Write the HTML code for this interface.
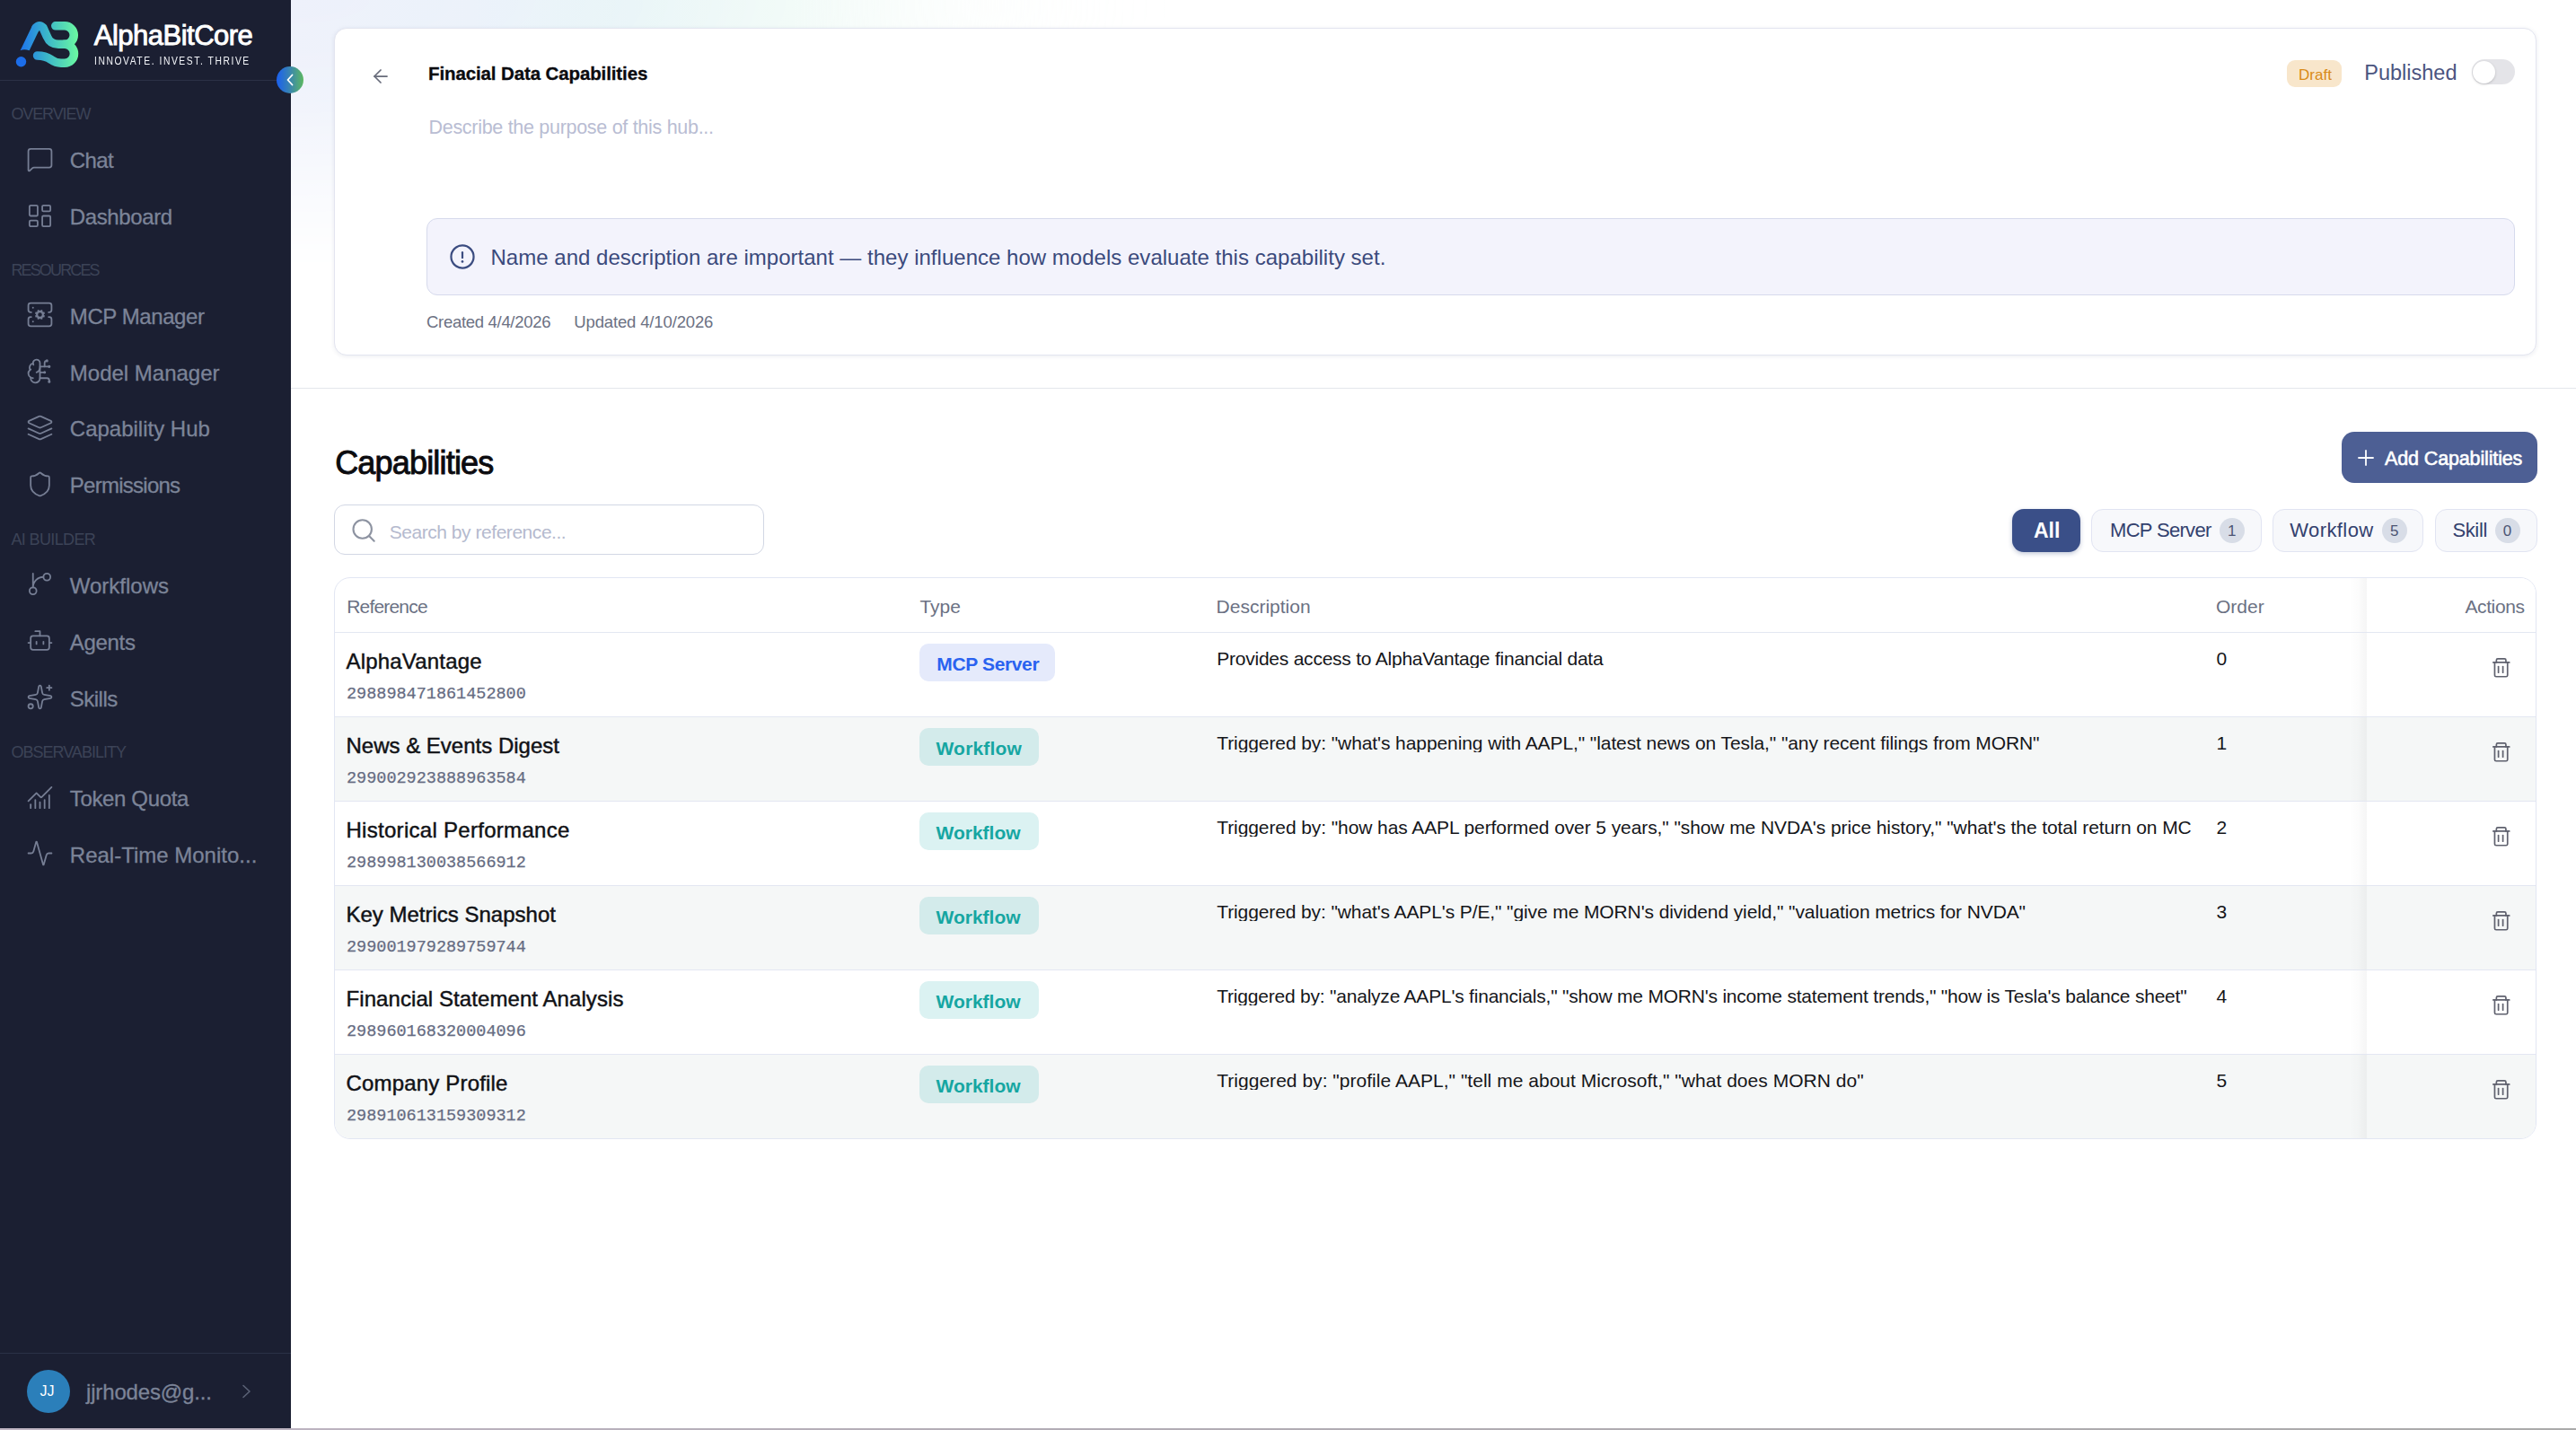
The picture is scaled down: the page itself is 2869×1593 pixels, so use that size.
<!DOCTYPE html>
<html><head><meta charset="utf-8"><title>Capability Hub</title>
<style>
*{box-sizing:border-box;margin:0;padding:0}
html,body{width:2869px;height:1593px;overflow:hidden;background:#fff;font-family:"Liberation Sans",sans-serif}
.abs{position:absolute}
.t{position:absolute;white-space:nowrap;line-height:1}
.ico{fill:none;stroke:#767e94;stroke-width:1.4;stroke-linecap:round;stroke-linejoin:round}
</style></head><body>
<div class="abs" style="left:0;top:0;width:324px;height:1593px;background:#1b1f32"></div>
<svg class="abs" style="left:0;top:0" width="100" height="90" viewBox="0 0 100 90">
<defs><linearGradient id="lg" x1="20" y1="0" x2="88" y2="0" gradientUnits="userSpaceOnUse">
<stop offset="0" stop-color="#1b6ef0"/><stop offset=".45" stop-color="#39b3cc"/><stop offset="1" stop-color="#6cfba0"/></linearGradient></defs>
<circle cx="23.5" cy="68.8" r="5.7" fill="#1c6de9"/>
<g fill="none" stroke="url(#lg)" stroke-width="9.6" stroke-linejoin="round">
<path stroke-linecap="round" d="M72 49.3 A10.45 10.45 0 0 1 72 70.2 L68 70.2 C64 70.2 61 69.5 57 66.5 C52 63 48 62 41.6 62"/>
<path stroke-linecap="round" d="M61.8 28.8 L72 28.8 A10.25 10.25 0 0 1 72 49.3 L65 49.3 Q56 49.3 52.5 41 L48 31 Q44 26.4 40 31"/>
</g>
<path d="M35.5 29.5 L22.6 56.2 Q27 54.5 32.7 56.2 L43.8 33 Z" fill="url(#lg)"/>
</svg>
<div id="brand" class="t" style="left:104.80px;top:24.16px;font-size:31px;color:#fff;font-weight:normal;font-family:'Liberation Sans',sans-serif;letter-spacing:-0.509px;-webkit-text-stroke:0.9px #fff;">AlphaBitCore</div>
<div id="tag" class="t" style="left:104.80px;top:62.08px;font-size:12.9px;color:#f4f6fa;font-weight:normal;font-family:'Liberation Sans',sans-serif;letter-spacing:1.948px;transform:scaleX(0.8);transform-origin:0 0;">INNOVATE. INVEST. THRIVE</div>
<div class="abs" style="left:0;top:89px;width:324px;height:1px;background:#2b3146"></div>
<div id="sec0" class="t" style="left:12.40px;top:117.76px;font-size:18px;color:#3c4357;font-weight:normal;font-family:'Liberation Sans',sans-serif;letter-spacing:-1.100px;">OVERVIEW</div>
<div id="sec1" class="t" style="left:12.40px;top:292.26px;font-size:18px;color:#3c4357;font-weight:normal;font-family:'Liberation Sans',sans-serif;letter-spacing:-1.850px;">RESOURCES</div>
<div id="sec2" class="t" style="left:12.40px;top:591.76px;font-size:18px;color:#3c4357;font-weight:normal;font-family:'Liberation Sans',sans-serif;letter-spacing:-0.622px;">AI BUILDER</div>
<div id="sec3" class="t" style="left:12.40px;top:828.76px;font-size:18px;color:#3c4357;font-weight:normal;font-family:'Liberation Sans',sans-serif;letter-spacing:-0.983px;">OBSERVABILITY</div>
<svg class="abs ico" style="left:29.4px;top:162.25px" width="31" height="31" viewBox="0 0 24 24"><path d="M22 17a2 2 0 0 1-2 2H6.828a2 2 0 0 0-1.414.586l-2.202 2.202A.71.71 0 0 1 2 21.286V5a2 2 0 0 1 2-2h16a2 2 0 0 1 2 2z"/></svg>
<div id="nav0" class="t" style="left:77.80px;top:166.78px;font-size:24px;color:#7c8498;font-weight:normal;font-family:'Liberation Sans',sans-serif;letter-spacing:-0.600px;-webkit-text-stroke:0.3px #7c8498;">Chat</div>
<svg class="abs ico" style="left:29.4px;top:224.55px" width="31" height="31" viewBox="0 0 24 24"><rect x="3" y="3" width="7" height="9" rx="1"/><rect x="14" y="3" width="7" height="5" rx="1"/><rect x="14" y="12" width="7" height="9" rx="1"/><rect x="3" y="16" width="7" height="5" rx="1"/></svg>
<div id="nav1" class="t" style="left:77.80px;top:229.68px;font-size:24px;color:#7c8498;font-weight:normal;font-family:'Liberation Sans',sans-serif;letter-spacing:-0.375px;-webkit-text-stroke:0.3px #7c8498;">Dashboard</div>
<svg class="abs ico" style="left:29.4px;top:335.45px" width="31" height="31" viewBox="0 0 24 24"><path d="M4.5 10H4a2 2 0 0 1-2-2V4a2 2 0 0 1 2-2h16a2 2 0 0 1 2 2v4a2 2 0 0 1-2 2h-.5"/><path d="M4.5 14H4a2 2 0 0 0-2 2v4a2 2 0 0 0 2 2h16a2 2 0 0 0 2-2v-4a2 2 0 0 0-2-2h-.5"/><circle cx="6" cy="6" r=".75" fill="#767e94" stroke="none"/><circle cx="6" cy="18" r=".75" fill="#767e94" stroke="none"/><circle cx="12" cy="12" r="2.6" stroke-width="1.7"/><path stroke-width="1.7" stroke-linecap="butt" d="M14.68 13.11L15.97 13.65M13.11 14.68L13.65 15.97M10.89 14.68L10.35 15.97M9.32 13.11L8.03 13.65M9.32 10.89L8.03 10.35M10.89 9.32L10.35 8.03M13.11 9.32L13.65 8.03M14.68 10.89L15.97 10.35"/></svg>
<div id="nav2" class="t" style="left:77.80px;top:340.68px;font-size:24px;color:#7c8498;font-weight:normal;font-family:'Liberation Sans',sans-serif;letter-spacing:-0.410px;-webkit-text-stroke:0.3px #7c8498;">MCP Manager</div>
<svg class="abs ico" style="left:29.4px;top:398.30px" width="31" height="31" viewBox="0 0 24 24"><path d="M12 5a3 3 0 1 0-5.997.125 4 4 0 0 0-2.526 5.77 4 4 0 0 0 .556 6.588A4 4 0 1 0 12 18Z"/><path d="M9 13a4.5 4.5 0 0 0 3-4"/><path d="M6.003 5.125A3 3 0 0 0 6.401 6.5"/><path d="M3.477 10.896a4 4 0 0 1 .585-.396"/><path d="M6 18a4 4 0 0 1-1.967-.516"/><path d="M12 13h4"/><path d="M12 18h6a2 2 0 0 1 2 2v1"/><path d="M12 8h8"/><path d="M16 8V5a2 2 0 0 1 2-2"/><circle cx="16" cy="13" r=".5"/><circle cx="18" cy="3" r=".5"/><circle cx="20" cy="21" r=".5"/><circle cx="20" cy="8" r=".5"/></svg>
<div id="nav3" class="t" style="left:77.80px;top:403.68px;font-size:24px;color:#7c8498;font-weight:normal;font-family:'Liberation Sans',sans-serif;letter-spacing:0.000px;-webkit-text-stroke:0.3px #7c8498;">Model Manager</div>
<svg class="abs ico" style="left:29.4px;top:461.35px" width="31" height="31" viewBox="0 0 24 24"><path d="M12.83 2.18a2 2 0 0 0-1.66 0L2.6 6.08a1 1 0 0 0 0 1.83l8.58 3.91a2 2 0 0 0 1.66 0l8.58-3.9a1 1 0 0 0 0-1.83Z"/><path d="m22 17.65-9.17 4.16a2 2 0 0 1-1.66 0L2 17.65"/><path d="m22 12.65-9.17 4.16a2 2 0 0 1-1.66 0L2 12.65"/></svg>
<div id="nav4" class="t" style="left:77.80px;top:466.28px;font-size:24px;color:#7c8498;font-weight:normal;font-family:'Liberation Sans',sans-serif;letter-spacing:0.000px;-webkit-text-stroke:0.3px #7c8498;">Capability Hub</div>
<svg class="abs ico" style="left:29.4px;top:524.10px" width="31" height="31" viewBox="0 0 24 24"><path d="M20 13c0 5-3.5 7.5-7.66 8.95a1 1 0 0 1-.67-.01C7.5 20.5 4 18 4 13V6a1 1 0 0 1 1-1c2 0 4.5-1.2 6.24-2.72a1.17 1.17 0 0 1 1.52 0C14.51 3.81 17 5 19 5a1 1 0 0 1 1 1z"/></svg>
<div id="nav5" class="t" style="left:77.80px;top:528.68px;font-size:24px;color:#7c8498;font-weight:normal;font-family:'Liberation Sans',sans-serif;letter-spacing:-0.740px;-webkit-text-stroke:0.3px #7c8498;">Permissions</div>
<svg class="abs ico" style="left:29.4px;top:635.30px" width="31" height="31" viewBox="0 0 24 24"><path d="M15 6a9 9 0 0 0-9 9V3"/><circle cx="18" cy="6" r="3"/><circle cx="6" cy="18" r="3"/></svg>
<div id="nav6" class="t" style="left:77.80px;top:640.68px;font-size:24px;color:#7c8498;font-weight:normal;font-family:'Liberation Sans',sans-serif;letter-spacing:0.000px;-webkit-text-stroke:0.3px #7c8498;">Workflows</div>
<svg class="abs ico" style="left:29.4px;top:698.35px" width="31" height="31" viewBox="0 0 24 24"><path d="M12 8V4H8"/><rect width="16" height="12" x="4" y="8" rx="2"/><path d="M2 14h2"/><path d="M20 14h2"/><path d="M15 13v2"/><path d="M9 13v2"/></svg>
<div id="nav7" class="t" style="left:77.80px;top:704.38px;font-size:24px;color:#7c8498;font-weight:normal;font-family:'Liberation Sans',sans-serif;letter-spacing:-0.320px;-webkit-text-stroke:0.3px #7c8498;">Agents</div>
<svg class="abs ico" style="left:29.4px;top:761.45px" width="31" height="31" viewBox="0 0 24 24"><path d="M11.017 2.814a1 1 0 0 1 1.966 0l1.051 5.558a2 2 0 0 0 1.594 1.594l5.558 1.051a1 1 0 0 1 0 1.966l-5.558 1.051a2 2 0 0 0-1.594 1.594l-1.051 5.558a1 1 0 0 1-1.966 0l-1.051-5.558a2 2 0 0 0-1.594-1.594l-5.558-1.051a1 1 0 0 1 0-1.966l5.558-1.051a2 2 0 0 0 1.594-1.594z"/><path d="M20 2v4"/><path d="M22 4h-4"/><circle cx="4" cy="20" r="2"/></svg>
<div id="nav8" class="t" style="left:77.80px;top:766.68px;font-size:24px;color:#7c8498;font-weight:normal;font-family:'Liberation Sans',sans-serif;letter-spacing:-0.520px;-webkit-text-stroke:0.3px #7c8498;">Skills</div>
<svg class="abs ico" style="left:29.4px;top:872.60px" width="31" height="31" viewBox="0 0 24 24"><path d="M12 16v5"/><path d="M16 14v7"/><path d="M20 10v11"/><path d="m22 3-8.646 8.646a.5.5 0 0 1-.708 0L9.354 8.354a.5.5 0 0 0-.707 0L2 15"/><path d="M4 18v3"/><path d="M8 14v7"/></svg>
<div id="nav9" class="t" style="left:77.80px;top:877.68px;font-size:24px;color:#7c8498;font-weight:normal;font-family:'Liberation Sans',sans-serif;letter-spacing:-0.360px;-webkit-text-stroke:0.3px #7c8498;">Token Quota</div>
<svg class="abs ico" style="left:29.4px;top:935.35px" width="31" height="31" viewBox="0 0 24 24"><path d="M22 12h-2.48a2 2 0 0 0-1.93 1.46l-2.35 8.36a.25.25 0 0 1-.48 0L9.24 2.18a.25.25 0 0 0-.48 0l-2.35 8.36A2 2 0 0 1 4.49 12H2"/></svg>
<div id="nav10" class="t" style="left:77.80px;top:941.48px;font-size:24px;color:#7c8498;font-weight:normal;font-family:'Liberation Sans',sans-serif;letter-spacing:0.000px;-webkit-text-stroke:0.3px #7c8498;">Real-Time Monito...</div>
<div class="abs" style="left:0;top:1507px;width:324px;height:1px;background:#2b3146"></div>
<div class="abs" style="left:30px;top:1526px;width:48px;height:48px;border-radius:50%;background:#2b7fba"></div>
<div id="jj" class="t" style="left:44.50px;top:1542.46px;font-size:16px;color:#fff;font-weight:normal;font-family:'Liberation Sans',sans-serif;letter-spacing:0.000px;">JJ</div>
<div id="email" class="t" style="left:96.00px;top:1539.18px;font-size:24px;color:#7c8498;font-weight:normal;font-family:'Liberation Sans',sans-serif;letter-spacing:-0.150px;-webkit-text-stroke:0.3px #7c8498;">jjrhodes@g...</div>
<svg class="abs" style="left:264px;top:1540px" width="20" height="20" viewBox="0 0 20 20" fill="none" stroke="#5b6276" stroke-width="1.6" stroke-linecap="round" stroke-linejoin="round"><path d="M7 3.5 L14 10 L7 16.5"/></svg>
<div class="abs" style="left:324px;top:0;width:1000px;height:340px;background:linear-gradient(90deg,#eef1fb 0%,#eaf1fa 20%,#e5f3f6 38%,#e7f7f2 56%,rgba(240,251,245,.55) 76%,rgba(255,255,255,0) 100%);-webkit-mask-image:radial-gradient(ellipse 1000px 300px at 0 0,#000 0%,rgba(0,0,0,.85) 35%,rgba(0,0,0,.35) 70%,rgba(0,0,0,0) 100%)"></div>
<div class="abs" style="left:372.4px;top:30.5px;width:2453px;height:365px;background:#fff;border:1px solid #e3e5f0;border-radius:14px;box-shadow:0 1px 5px rgba(30,40,90,.09)"></div>
<svg class="abs" style="left:412px;top:73px" width="24" height="24" viewBox="0 0 24 24" fill="none" stroke="#676b7a" stroke-width="1.75" stroke-linecap="round" stroke-linejoin="round"><path d="m12 19-7-7 7-7"/><path d="M19 12H5"/></svg>
<div id="title" class="t" style="left:477.00px;top:71.65px;font-size:20.5px;color:#0b0b0f;font-weight:bold;font-family:'Liberation Sans',sans-serif;letter-spacing:-0.116px;-webkit-text-stroke:0.3px #0b0b0f;">Finacial Data Capabilities</div>
<div class="abs" style="left:2547px;top:67px;width:61px;height:29.5px;border-radius:9px;background:#f8e6cb"></div>
<div id="draft" class="t" style="left:2560.10px;top:74.71px;font-size:17px;color:#d98a16;font-weight:normal;font-family:'Liberation Sans',sans-serif;letter-spacing:0.000px;">Draft</div>
<div id="pub" class="t" style="left:2633.30px;top:69.71px;font-size:23.5px;color:#4b5480;font-weight:normal;font-family:'Liberation Sans',sans-serif;letter-spacing:0.000px;">Published</div>
<div class="abs" style="left:2752.8px;top:66px;width:48.2px;height:28px;border-radius:14px;background:#e4e4e8"></div>
<div class="abs" style="left:2753.5px;top:67.5px;width:25px;height:25px;border-radius:50%;background:#fff;box-shadow:0 1px 3px rgba(0,0,0,.18)"></div>
<div id="ph" class="t" style="left:477.50px;top:131.90px;font-size:21.5px;color:#b9bdd3;font-weight:normal;font-family:'Liberation Sans',sans-serif;letter-spacing:-0.294px;">Describe the purpose of this hub...</div>
<div class="abs" style="left:475px;top:243px;width:2326px;height:85.5px;border-radius:12px;background:#f3f3fc;border:1px solid #d6daec"></div>
<svg class="abs" style="left:499px;top:269.7px" width="32" height="32" viewBox="0 0 32 32" fill="none" stroke="#3b4c80" stroke-width="2.2" stroke-linecap="round"><circle cx="16" cy="16" r="12.55"/><path d="M16 11.2V17.2"/><path d="M16 21.4h.01" stroke-width="2.7"/></svg>
<div id="info" class="t" style="left:546.50px;top:275.48px;font-size:24px;color:#3b4a7c;font-weight:normal;font-family:'Liberation Sans',sans-serif;letter-spacing:0.018px;">Name and description are important — they influence how models evaluate this capability set.</div>
<div id="created" class="t" style="left:475.00px;top:349.94px;font-size:18.5px;color:#6c7183;font-weight:normal;font-family:'Liberation Sans',sans-serif;letter-spacing:-0.300px;">Created 4/4/2026</div>
<div id="updated" class="t" style="left:639.30px;top:349.94px;font-size:18.5px;color:#6c7183;font-weight:normal;font-family:'Liberation Sans',sans-serif;letter-spacing:-0.144px;">Updated 4/10/2026</div>
<div class="abs" style="left:324px;top:431.5px;width:2545px;height:1px;background:#e4e6ec"></div>
<div id="caps" class="t" style="left:373.20px;top:498.43px;font-size:36px;color:#0b0b0f;font-weight:normal;font-family:'Liberation Sans',sans-serif;letter-spacing:-0.818px;-webkit-text-stroke:0.9px #0b0b0f;">Capabilities</div>
<div class="abs" style="left:2608px;top:481px;width:218px;height:57px;border-radius:14px;background:#4d5f94"></div>
<svg class="abs" style="left:2626px;top:501px" width="18" height="18" viewBox="0 0 18 18" fill="none" stroke="#fff" stroke-width="1.8" stroke-linecap="round"><path d="M1 9h16"/><path d="M9 1v16"/></svg>
<div id="add" class="t" style="left:2656.10px;top:500.60px;font-size:21.5px;color:#fff;font-weight:normal;font-family:'Liberation Sans',sans-serif;letter-spacing:-0.140px;-webkit-text-stroke:0.6px #fff;">Add Capabilities</div>
<div class="abs" style="left:372px;top:562.4px;width:479px;height:56px;border-radius:12px;background:#fff;border:1px solid #d2d7e4"></div>
<svg class="abs" style="left:391px;top:577px" width="28" height="28" viewBox="0 0 28 28" fill="none" stroke="#8d93a1" stroke-width="2.1" stroke-linecap="round"><circle cx="12.7" cy="12.5" r="10.2"/><path d="m20 20 5.7 5.7"/></svg>
<div id="sph" class="t" style="left:433.70px;top:582.02px;font-size:21px;color:#b5bace;font-weight:normal;font-family:'Liberation Sans',sans-serif;letter-spacing:-0.457px;">Search by reference...</div>
<div class="abs" style="left:2241px;top:567px;width:76px;height:47.7px;border-radius:13px;background:#3a4f88;box-shadow:0 2px 5px rgba(40,60,120,.28)"></div>
<div id="all" class="t" style="left:2265.00px;top:579.53px;font-size:23px;color:#fff;font-weight:bold;font-family:'Liberation Sans',sans-serif;letter-spacing:0.000px;">All</div>
<div class="abs" style="left:2329.2px;top:567px;width:189.4px;height:47.7px;border-radius:13px;background:#f7f8fb;border:1px solid #e1e4f2"></div>
<div id="c1" class="t" style="left:2350.00px;top:580.08px;font-size:22px;color:#33416e;font-weight:normal;font-family:'Liberation Sans',sans-serif;letter-spacing:-0.678px;">MCP Server</div>
<div class="abs" style="left:2472px;top:577px;width:27.8px;height:27.8px;border-radius:50%;background:#d8dde7"></div>
<div id="c1n" class="t" style="left:2480.90px;top:582.61px;font-size:17px;color:#4c5573;font-weight:normal;font-family:'Liberation Sans',sans-serif;letter-spacing:0.000px;">1</div>
<div class="abs" style="left:2531.3px;top:567px;width:168.2px;height:47.7px;border-radius:13px;background:#f7f8fb;border:1px solid #e1e4f2"></div>
<div id="c2" class="t" style="left:2550.30px;top:580.08px;font-size:22px;color:#33416e;font-weight:normal;font-family:'Liberation Sans',sans-serif;letter-spacing:0.400px;">Workflow</div>
<div class="abs" style="left:2653.2px;top:577px;width:27.8px;height:27.8px;border-radius:50%;background:#d8dde7"></div>
<div id="c2n" class="t" style="left:2662.10px;top:582.61px;font-size:17px;color:#4c5573;font-weight:normal;font-family:'Liberation Sans',sans-serif;letter-spacing:0.000px;">5</div>
<div class="abs" style="left:2712.1px;top:567px;width:113.5px;height:47.7px;border-radius:13px;background:#f7f8fb;border:1px solid #e1e4f2"></div>
<div id="c3" class="t" style="left:2731.40px;top:580.08px;font-size:22px;color:#33416e;font-weight:normal;font-family:'Liberation Sans',sans-serif;letter-spacing:-0.350px;">Skill</div>
<div class="abs" style="left:2778.9px;top:577px;width:27.8px;height:27.8px;border-radius:50%;background:#d8dde7"></div>
<div id="c3n" class="t" style="left:2787.80px;top:582.61px;font-size:17px;color:#4c5573;font-weight:normal;font-family:'Liberation Sans',sans-serif;letter-spacing:0.000px;">0</div>
<div class="abs" style="left:372.2px;top:643px;width:2453.3px;height:625.5px;border:1px solid #e2e6f3;border-radius:18px;overflow:hidden;background:#fff">
<div id="h0" class="t" style="left:13.10px;top:21.22px;font-size:21px;color:#6b7183;font-weight:normal;font-family:'Liberation Sans',sans-serif;letter-spacing:-0.825px;">Reference</div>
<div id="h1" class="t" style="left:651.20px;top:21.22px;font-size:21px;color:#6b7183;font-weight:normal;font-family:'Liberation Sans',sans-serif;letter-spacing:0.000px;">Type</div>
<div id="h2" class="t" style="left:981.40px;top:21.22px;font-size:21px;color:#6b7183;font-weight:normal;font-family:'Liberation Sans',sans-serif;letter-spacing:0.000px;">Description</div>
<div id="h3" class="t" style="left:2094.80px;top:21.22px;font-size:21px;color:#6b7183;font-weight:normal;font-family:'Liberation Sans',sans-serif;letter-spacing:0.000px;">Order</div>
<div class="abs" style="left:0;top:60px;width:100%;height:1px;background:#e3e7f2;z-index:3"></div>
<div class="abs" style="left:0;top:61px;width:100%;height:94px;background:#ffffff"></div>
<div class="abs" style="left:0;top:154px;width:100%;height:1px;background:#e3e7f2;z-index:3"></div>
<div id="n0" class="t" style="left:12.30px;top:80.68px;font-size:24px;color:#111216;font-weight:normal;font-family:'Liberation Sans',sans-serif;letter-spacing:0.191px;-webkit-text-stroke:0.45px #111216;">AlphaVantage</div>
<div id="i0" class="t" style="left:12.80px;top:121.14px;font-size:18.5px;color:#666c82;font-weight:normal;font-family:'Liberation Mono',sans-serif;letter-spacing:0.000px;-webkit-text-stroke:0.25px #666c82;">298898471861452800</div>
<div class="abs" style="left:651.0px;top:73.1px;width:150.8px;height:41.7px;border-radius:10px;background:#e5eafb"></div>
<div id="b0" class="t" style="left:670.10px;top:85.12px;font-size:21px;color:#2a62f0;font-weight:bold;font-family:'Liberation Sans',sans-serif;letter-spacing:-0.356px;">MCP Server</div>
<div id="d0" class="t" style="left:982.05px;top:79.02px;font-size:21px;color:#15161a;font-weight:normal;font-family:'Liberation Sans',sans-serif;letter-spacing:-0.233px;width:1090.8px;overflow:hidden;">Provides access to AlphaVantage financial data</div>
<div id="o0" class="t" style="left:2095.20px;top:78.72px;font-size:21px;color:#15161a;font-weight:normal;font-family:'Liberation Sans',sans-serif;letter-spacing:0.000px;">0</div>
<div class="abs" style="left:2262.8px;top:61px;width:190px;height:93px;background:#ffffff;z-index:2"><svg class="abs" style="left:140.4px;top:28.4px" width="20" height="22" viewBox="0 0 20 22" fill="none" stroke="#5f616e" stroke-width="1.7" stroke-linecap="round" stroke-linejoin="round"><path d="M0.85 4.9H18.75"/><path d="M4.35 4.9V2.45Q4.35 0.85 5.95 0.85H13.35Q14.95 0.85 14.95 2.45V4.9"/><path d="M2.45 4.9V19.15Q2.45 20.75 4.05 20.75H15.15Q16.75 20.75 16.75 19.15V4.9"/><path d="M6.6 9.6V16.2"/><path d="M11.6 9.6V16.2"/></svg></div>
<div class="abs" style="left:0;top:155px;width:100%;height:94px;background:#f5f7f7"></div>
<div class="abs" style="left:0;top:248px;width:100%;height:1px;background:#e3e7f2;z-index:3"></div>
<div id="n1" class="t" style="left:12.30px;top:174.68px;font-size:24px;color:#111216;font-weight:normal;font-family:'Liberation Sans',sans-serif;letter-spacing:0.000px;-webkit-text-stroke:0.45px #111216;">News &amp; Events Digest</div>
<div id="i1" class="t" style="left:12.80px;top:215.14px;font-size:18.5px;color:#666c82;font-weight:normal;font-family:'Liberation Mono',sans-serif;letter-spacing:0.000px;-webkit-text-stroke:0.25px #666c82;">299002923888963584</div>
<div class="abs" style="left:651.0px;top:167.2px;width:132.6px;height:41.5px;border-radius:10px;background:#d3ebeb"></div>
<div id="b1" class="t" style="left:669.30px;top:179.32px;font-size:21px;color:#16a6a2;font-weight:bold;font-family:'Liberation Sans',sans-serif;letter-spacing:0.186px;">Workflow</div>
<div id="d1" class="t" style="left:982.05px;top:173.02px;font-size:21px;color:#15161a;font-weight:normal;font-family:'Liberation Sans',sans-serif;letter-spacing:-0.093px;width:1090.8px;overflow:hidden;">Triggered by: "what's happening with AAPL," "latest news on Tesla," "any recent filings from MORN"</div>
<div id="o1" class="t" style="left:2095.20px;top:172.72px;font-size:21px;color:#15161a;font-weight:normal;font-family:'Liberation Sans',sans-serif;letter-spacing:0.000px;">1</div>
<div class="abs" style="left:2262.8px;top:155px;width:190px;height:93px;background:#f5f7f7;z-index:2"><svg class="abs" style="left:140.4px;top:28.4px" width="20" height="22" viewBox="0 0 20 22" fill="none" stroke="#5f616e" stroke-width="1.7" stroke-linecap="round" stroke-linejoin="round"><path d="M0.85 4.9H18.75"/><path d="M4.35 4.9V2.45Q4.35 0.85 5.95 0.85H13.35Q14.95 0.85 14.95 2.45V4.9"/><path d="M2.45 4.9V19.15Q2.45 20.75 4.05 20.75H15.15Q16.75 20.75 16.75 19.15V4.9"/><path d="M6.6 9.6V16.2"/><path d="M11.6 9.6V16.2"/></svg></div>
<div class="abs" style="left:0;top:249px;width:100%;height:94px;background:#ffffff"></div>
<div class="abs" style="left:0;top:342px;width:100%;height:1px;background:#e3e7f2;z-index:3"></div>
<div id="n2" class="t" style="left:12.30px;top:268.68px;font-size:24px;color:#111216;font-weight:normal;font-family:'Liberation Sans',sans-serif;letter-spacing:0.290px;-webkit-text-stroke:0.45px #111216;">Historical Performance</div>
<div id="i2" class="t" style="left:12.80px;top:309.14px;font-size:18.5px;color:#666c82;font-weight:normal;font-family:'Liberation Mono',sans-serif;letter-spacing:0.000px;-webkit-text-stroke:0.25px #666c82;">298998130038566912</div>
<div class="abs" style="left:651.0px;top:261.2px;width:132.6px;height:41.5px;border-radius:10px;background:#dbf2f2"></div>
<div id="b2" class="t" style="left:669.30px;top:273.32px;font-size:21px;color:#16a6a2;font-weight:bold;font-family:'Liberation Sans',sans-serif;letter-spacing:0.000px;">Workflow</div>
<div id="d2" class="t" style="left:982.05px;top:267.02px;font-size:21px;color:#15161a;font-weight:normal;font-family:'Liberation Sans',sans-serif;letter-spacing:-0.093px;width:1090.8px;overflow:hidden;">Triggered by: "how has AAPL performed over 5 years," "show me NVDA's price history," "what's the total return on MC</div>
<div id="o2" class="t" style="left:2095.20px;top:266.72px;font-size:21px;color:#15161a;font-weight:normal;font-family:'Liberation Sans',sans-serif;letter-spacing:0.000px;">2</div>
<div class="abs" style="left:2262.8px;top:249px;width:190px;height:93px;background:#ffffff;z-index:2"><svg class="abs" style="left:140.4px;top:28.4px" width="20" height="22" viewBox="0 0 20 22" fill="none" stroke="#5f616e" stroke-width="1.7" stroke-linecap="round" stroke-linejoin="round"><path d="M0.85 4.9H18.75"/><path d="M4.35 4.9V2.45Q4.35 0.85 5.95 0.85H13.35Q14.95 0.85 14.95 2.45V4.9"/><path d="M2.45 4.9V19.15Q2.45 20.75 4.05 20.75H15.15Q16.75 20.75 16.75 19.15V4.9"/><path d="M6.6 9.6V16.2"/><path d="M11.6 9.6V16.2"/></svg></div>
<div class="abs" style="left:0;top:343px;width:100%;height:94px;background:#f5f7f7"></div>
<div class="abs" style="left:0;top:436px;width:100%;height:1px;background:#e3e7f2;z-index:3"></div>
<div id="n3" class="t" style="left:12.30px;top:362.68px;font-size:24px;color:#111216;font-weight:normal;font-family:'Liberation Sans',sans-serif;letter-spacing:0.000px;-webkit-text-stroke:0.45px #111216;">Key Metrics Snapshot</div>
<div id="i3" class="t" style="left:12.80px;top:403.14px;font-size:18.5px;color:#666c82;font-weight:normal;font-family:'Liberation Mono',sans-serif;letter-spacing:0.000px;-webkit-text-stroke:0.25px #666c82;">299001979289759744</div>
<div class="abs" style="left:651.0px;top:355.2px;width:132.6px;height:41.5px;border-radius:10px;background:#d3ebeb"></div>
<div id="b3" class="t" style="left:669.30px;top:367.32px;font-size:21px;color:#16a6a2;font-weight:bold;font-family:'Liberation Sans',sans-serif;letter-spacing:0.000px;">Workflow</div>
<div id="d3" class="t" style="left:982.05px;top:361.02px;font-size:21px;color:#15161a;font-weight:normal;font-family:'Liberation Sans',sans-serif;letter-spacing:-0.112px;width:1090.8px;overflow:hidden;">Triggered by: "what's AAPL's P/E," "give me MORN's dividend yield," "valuation metrics for NVDA"</div>
<div id="o3" class="t" style="left:2095.20px;top:360.72px;font-size:21px;color:#15161a;font-weight:normal;font-family:'Liberation Sans',sans-serif;letter-spacing:0.000px;">3</div>
<div class="abs" style="left:2262.8px;top:343px;width:190px;height:93px;background:#f5f7f7;z-index:2"><svg class="abs" style="left:140.4px;top:28.4px" width="20" height="22" viewBox="0 0 20 22" fill="none" stroke="#5f616e" stroke-width="1.7" stroke-linecap="round" stroke-linejoin="round"><path d="M0.85 4.9H18.75"/><path d="M4.35 4.9V2.45Q4.35 0.85 5.95 0.85H13.35Q14.95 0.85 14.95 2.45V4.9"/><path d="M2.45 4.9V19.15Q2.45 20.75 4.05 20.75H15.15Q16.75 20.75 16.75 19.15V4.9"/><path d="M6.6 9.6V16.2"/><path d="M11.6 9.6V16.2"/></svg></div>
<div class="abs" style="left:0;top:437px;width:100%;height:94px;background:#ffffff"></div>
<div class="abs" style="left:0;top:530px;width:100%;height:1px;background:#e3e7f2;z-index:3"></div>
<div id="n4" class="t" style="left:12.30px;top:456.68px;font-size:24px;color:#111216;font-weight:normal;font-family:'Liberation Sans',sans-serif;letter-spacing:0.078px;-webkit-text-stroke:0.45px #111216;">Financial Statement Analysis</div>
<div id="i4" class="t" style="left:12.80px;top:497.14px;font-size:18.5px;color:#666c82;font-weight:normal;font-family:'Liberation Mono',sans-serif;letter-spacing:0.000px;-webkit-text-stroke:0.25px #666c82;">298960168320004096</div>
<div class="abs" style="left:651.0px;top:449.2px;width:132.6px;height:41.5px;border-radius:10px;background:#dbf2f2"></div>
<div id="b4" class="t" style="left:669.30px;top:461.32px;font-size:21px;color:#16a6a2;font-weight:bold;font-family:'Liberation Sans',sans-serif;letter-spacing:0.000px;">Workflow</div>
<div id="d4" class="t" style="left:982.05px;top:455.02px;font-size:21px;color:#15161a;font-weight:normal;font-family:'Liberation Sans',sans-serif;letter-spacing:-0.215px;width:1090.8px;overflow:hidden;">Triggered by: "analyze AAPL's financials," "show me MORN's income statement trends," "how is Tesla's balance sheet"</div>
<div id="o4" class="t" style="left:2095.20px;top:454.72px;font-size:21px;color:#15161a;font-weight:normal;font-family:'Liberation Sans',sans-serif;letter-spacing:0.000px;">4</div>
<div class="abs" style="left:2262.8px;top:437px;width:190px;height:93px;background:#ffffff;z-index:2"><svg class="abs" style="left:140.4px;top:28.4px" width="20" height="22" viewBox="0 0 20 22" fill="none" stroke="#5f616e" stroke-width="1.7" stroke-linecap="round" stroke-linejoin="round"><path d="M0.85 4.9H18.75"/><path d="M4.35 4.9V2.45Q4.35 0.85 5.95 0.85H13.35Q14.95 0.85 14.95 2.45V4.9"/><path d="M2.45 4.9V19.15Q2.45 20.75 4.05 20.75H15.15Q16.75 20.75 16.75 19.15V4.9"/><path d="M6.6 9.6V16.2"/><path d="M11.6 9.6V16.2"/></svg></div>
<div class="abs" style="left:0;top:531px;width:100%;height:94px;background:#f5f7f7"></div>
<div id="n5" class="t" style="left:12.30px;top:550.68px;font-size:24px;color:#111216;font-weight:normal;font-family:'Liberation Sans',sans-serif;letter-spacing:0.179px;-webkit-text-stroke:0.45px #111216;">Company Profile</div>
<div id="i5" class="t" style="left:12.80px;top:591.14px;font-size:18.5px;color:#666c82;font-weight:normal;font-family:'Liberation Mono',sans-serif;letter-spacing:0.000px;-webkit-text-stroke:0.25px #666c82;">298910613159309312</div>
<div class="abs" style="left:651.0px;top:543.2px;width:132.6px;height:41.5px;border-radius:10px;background:#d3ebeb"></div>
<div id="b5" class="t" style="left:669.30px;top:555.32px;font-size:21px;color:#16a6a2;font-weight:bold;font-family:'Liberation Sans',sans-serif;letter-spacing:0.000px;">Workflow</div>
<div id="d5" class="t" style="left:982.05px;top:549.02px;font-size:21px;color:#15161a;font-weight:normal;font-family:'Liberation Sans',sans-serif;letter-spacing:0.024px;width:1090.8px;overflow:hidden;">Triggered by: "profile AAPL," "tell me about Microsoft," "what does MORN do"</div>
<div id="o5" class="t" style="left:2095.20px;top:548.72px;font-size:21px;color:#15161a;font-weight:normal;font-family:'Liberation Sans',sans-serif;letter-spacing:0.000px;">5</div>
<div class="abs" style="left:2262.8px;top:531px;width:190px;height:93px;background:#f5f7f7;z-index:2"><svg class="abs" style="left:140.4px;top:28.4px" width="20" height="22" viewBox="0 0 20 22" fill="none" stroke="#5f616e" stroke-width="1.7" stroke-linecap="round" stroke-linejoin="round"><path d="M0.85 4.9H18.75"/><path d="M4.35 4.9V2.45Q4.35 0.85 5.95 0.85H13.35Q14.95 0.85 14.95 2.45V4.9"/><path d="M2.45 4.9V19.15Q2.45 20.75 4.05 20.75H15.15Q16.75 20.75 16.75 19.15V4.9"/><path d="M6.6 9.6V16.2"/><path d="M11.6 9.6V16.2"/></svg></div>
<div class="abs" style="left:2262.8px;top:0;width:190px;height:60px;background:#fff;z-index:2"></div>
<div class="abs" style="left:2242.8px;top:0;width:20px;height:100%;background:linear-gradient(90deg,rgba(0,0,0,0),rgba(0,0,0,.012) 50%,rgba(0,0,0,.04));z-index:2"></div>
<div id="h4" class="t" style="left:2372.20px;top:21.32px;font-size:21px;color:#6b7183;font-weight:normal;font-family:'Liberation Sans',sans-serif;letter-spacing:-0.367px;z-index:4;">Actions</div>
</div>
<div class="abs" style="left:308px;top:74px;width:30px;height:30px;border-radius:50%;background:linear-gradient(90deg,#1a5ff0 0%,#3a86b0 50%,#5cb860 100%)"></div>
<svg class="abs" style="left:308px;top:74px" width="30" height="30" viewBox="0 0 30 30" fill="none" stroke="#fff" stroke-width="1.8" stroke-linecap="round" stroke-linejoin="round"><path d="M17.5 9.5 L12.5 15 L17.5 20.5"/></svg>
<div class="abs" style="left:0;top:1591px;width:2869px;height:2px;background:linear-gradient(90deg,#c0b6c4,#b3adb6 40%,#ababab)"></div>
</body></html>
